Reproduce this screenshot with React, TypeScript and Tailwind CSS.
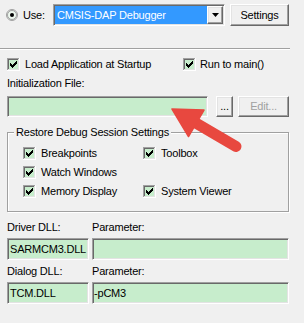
import React from "react";

const CHECK_PIXELS: [number, number][] = [
  [6, 0],
  [5, 1], [6, 1],
  [0, 2], [4, 2], [5, 2], [6, 2],
  [0, 3], [1, 3], [3, 3], [4, 3], [5, 3],
  [0, 4], [1, 4], [2, 4], [3, 4], [4, 4],
  [1, 5], [2, 5], [3, 5],
  [2, 6],
];

function Check() {
  return (
    <svg width="13" height="13" viewBox="0 0 13 13" shapeRendering="crispEdges" className="block shrink-0">
      <rect x="0" y="0" width="13" height="13" fill="#ffffff" />
      <rect x="0" y="0" width="12" height="12" fill="#a0a0a0" />
      <rect x="1" y="1" width="11" height="11" fill="#e3e3e3" />
      <rect x="1" y="1" width="10" height="10" fill="#696969" />
      <rect x="2" y="2" width="9" height="9" fill="#c7edcc" />
      {CHECK_PIXELS.map(([x, y], i) => (
        <rect key={i} x={x + 3} y={y + 3} width="1" height="1" fill="#000000" />
      ))}
    </svg>
  );
}

function Radio() {
  return (
    <svg width="12" height="12" viewBox="0 0 12 12" className="block shrink-0">
      <circle cx="6" cy="6" r="5.5" fill="#f4f4f4" stroke="#a0a0a0" strokeWidth="1" />
      <circle cx="6" cy="6" r="4.5" fill="#eef8ef" stroke="#6f6f6f" strokeWidth="0.6" />
      <circle cx="6" cy="6" r="2" fill="#000000" />
    </svg>
  );
}

function Edit({ className, children }: { className?: string; children?: React.ReactNode }) {
  return (
    <div
      className={
        "flex items-center overflow-hidden whitespace-nowrap pl-[2px] bg-[#c7edcc] border border-t-[#a0a0a0] border-l-[#a0a0a0] border-r-white border-b-white shadow-[inset_1px_1px_0_#696969,inset_-1px_-1px_0_#e3e3e3] " +
        (className ?? "")
      }
    >
      {children}
    </div>
  );
}

function Button({ className, children }: { className?: string; children?: React.ReactNode }) {
  return (
    <div
      className={
        "flex items-center justify-center whitespace-nowrap bg-[#f0f0f0] border border-t-white border-l-white border-r-[#696969] border-b-[#696969] shadow-[inset_-1px_-1px_0_#a0a0a0,inset_1px_1px_0_#e3e3e3] " +
        (className ?? "")
      }
    >
      {children}
    </div>
  );
}

function CheckItem({ label, gap, className }: { label: string; gap: string; className?: string }) {
  return (
    <div className={"flex items-center h-[13px] " + (className ?? "")}>
      <Check />
      <span className={gap + " whitespace-nowrap"}>{label}</span>
    </div>
  );
}

export default function App() {
  return (
    <div className="relative w-[304px] h-[323px] overflow-hidden bg-[#f0f0f0] text-[11px] leading-[13px] tracking-[-0.2px] text-black font-['Liberation_Sans',Arial,sans-serif]">
      {/* Use: row */}
      <div className="flex items-center h-[22px] mt-[4px] pl-[6px]">
        <Radio />
        <span className="ml-[5px] w-[30px]">Use:</span>
        <div className="flex w-[172px] h-[22px] p-[1px] bg-white border border-t-[#a0a0a0] border-l-[#a0a0a0] border-r-white border-b-white shadow-[inset_1px_1px_0_#696969,inset_-1px_-1px_0_#e3e3e3]">
          <div className="flex-1 flex items-center pl-[2px] bg-[#3399ff] text-white whitespace-nowrap">
            CMSIS-DAP Debugger
          </div>
          <Button className="w-[16px] h-full">
            <svg width="7" height="4" viewBox="0 0 7 4" className="block">
              <path d="M0 0 H7 L3.5 4 Z" fill="#000" />
            </svg>
          </Button>
        </div>
        <Button className="ml-[5px] w-[59px] h-[22px]">Settings</Button>
      </div>

      {/* separator */}
      <div className="mt-[22px] w-[290px] h-[2px] border-t border-t-[#a0a0a0] border-b border-b-white" />

      {/* load / run */}
      <div className="flex items-center h-[13px] mt-[8px] pl-[7px]">
        <CheckItem label="Load Application at Startup" gap="ml-[5px]" className="w-[176px]" />
        <CheckItem label="Run to main()" gap="ml-[4px]" />
      </div>

      <div className="mt-[6px] pl-[7px] h-[13px]">Initialization File:</div>

      <div className="flex mt-[6px] pl-[7px] h-[21px]">
        <Edit className="w-[201px]" />
        <Button className="ml-[8px] w-[17px]">...</Button>
        <Button className="ml-[5px] w-[51px] text-[#a0a0a0]">Edit...</Button>
      </div>

      {/* group box */}
      <div className="relative mt-[15px] ml-[7px] w-[282px] h-[80px] border border-[#a0a0a0] shadow-[1px_1px_0_#ffffff,inset_1px_1px_0_#ffffff]">
        <span className="absolute left-[6px] top-[-7px] px-[2px] bg-[#f0f0f0] whitespace-nowrap">
          Restore Debug Session Settings
        </span>
        <div className="flex flex-col gap-[6px] pt-[14px] pl-[15px]">
          <div className="flex items-center">
            <CheckItem label="Breakpoints" gap="ml-[5px]" className="w-[120px]" />
            <CheckItem label="Toolbox" gap="ml-[5px]" />
          </div>
          <div className="flex items-center">
            <CheckItem label="Watch Windows" gap="ml-[5px]" className="w-[120px]" />
          </div>
          <div className="flex items-center">
            <CheckItem label="Memory Display" gap="ml-[5px]" className="w-[120px]" />
            <CheckItem label="System Viewer" gap="ml-[5px]" />
          </div>
        </div>
      </div>

      {/* DLLs */}
      <div className="flex mt-[9px] pl-[7px] h-[13px]">
        <span className="w-[85px]">Driver DLL:</span>
        <span>Parameter:</span>
      </div>
      <div className="flex mt-[4px] pl-[7px] h-[22px]">
        <Edit className="w-[82px]">SARMCM3.DLL</Edit>
        <Edit className="ml-[3px] w-[197px]" />
      </div>
      <div className="flex mt-[5px] pl-[7px] h-[13px]">
        <span className="w-[85px]">Dialog DLL:</span>
        <span>Parameter:</span>
      </div>
      <div className="flex mt-[4px] pl-[7px] h-[22px]">
        <Edit className="w-[82px]">TCM.DLL</Edit>
        <Edit className="ml-[3px] w-[197px] !pl-[1px]">-pCM3</Edit>
      </div>

      {/* red annotation arrow */}
      <svg
        className="absolute left-0 top-0 pointer-events-none"
        width="304"
        height="323"
        viewBox="0 0 304 323"
      >
        <line x1="236" y1="146.5" x2="195" y2="122.5" stroke="#e8483f" strokeWidth="11" strokeLinecap="round" />
        <path d="M172 109 L204 110 L188.5 136.5 Z" fill="#e8483f" stroke="#e8483f" strokeWidth="1.5" strokeLinejoin="round" />
      </svg>
    </div>
  );
}
